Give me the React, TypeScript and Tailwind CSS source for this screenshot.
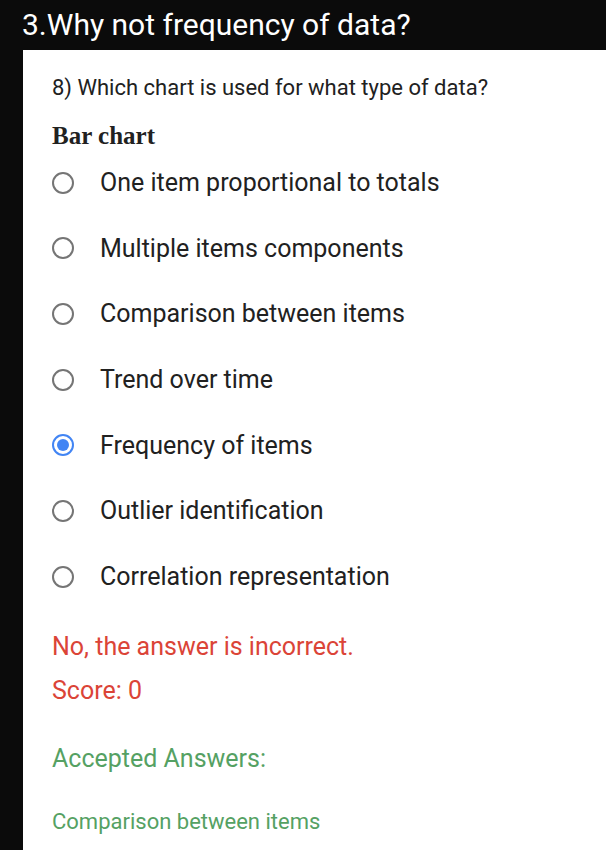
import React from 'react';

const options = [
  'One item proportional to totals',
  'Multiple items components',
  'Comparison between items',
  'Trend over time',
  'Frequency of items',
  'Outlier identification',
  'Correlation representation',
];

const selected = 'Frequency of items';

function Radio({ checked }: { checked: boolean }) {
  if (checked) {
    return (
      <div className="w-[22px] h-[22px] rounded-full border-2 border-[#4285f4] flex items-center justify-center">
        <div className="w-[12px] h-[12px] rounded-full bg-[#4285f4]" />
      </div>
    );
  }
  return <div className="w-[22px] h-[22px] rounded-full border-2 border-[#757575]" />;
}

export default function App() {
  return (
    <div className="w-[606px] h-[850px] bg-[#0b0b0b] overflow-hidden font-['Roboto',sans-serif]">
      {/* Title bar */}
      <div className="h-[50px] pl-[22px] flex items-center">
        <h1 className="text-[30px] leading-none text-white">3.Why not frequency of data?</h1>
      </div>

      {/* Question panel */}
      <div className="ml-[23px] bg-white h-[800px] pl-[29px] flex flex-col">
        <div className="mt-[22px] h-[30px] flex items-center text-[22px] text-[#212121]">
          8) Which chart is used for what type of data?
        </div>
        <div className="mt-[20px] h-[28px] flex items-center text-[25px] font-bold text-[#212121] font-['Liberation_Serif',serif]">
          Bar chart
        </div>

        <div className="flex flex-col">
          {options.map((opt) => (
            <div key={opt} className="h-[65.67px] flex items-center">
              <Radio checked={opt === selected} />
              <span className="ml-[26px] text-[25px] text-[#212121]">{opt}</span>
            </div>
          ))}
        </div>

        <div className="mt-[21px] h-[32px] flex items-center text-[25px] text-[#db4437]">
          No, the answer is incorrect.
        </div>
        <div className="mt-[12px] h-[32px] flex items-center text-[25px] text-[#db4437]">
          Score: 0
        </div>
        <div className="mt-[36px] h-[32px] flex items-center text-[25px] text-[#55a163]">
          Accepted Answers:
        </div>
        <div className="mt-[31px] h-[32px] flex items-center text-[22px] text-[#55a163]">
          Comparison between items
        </div>
      </div>
    </div>
  );
}
